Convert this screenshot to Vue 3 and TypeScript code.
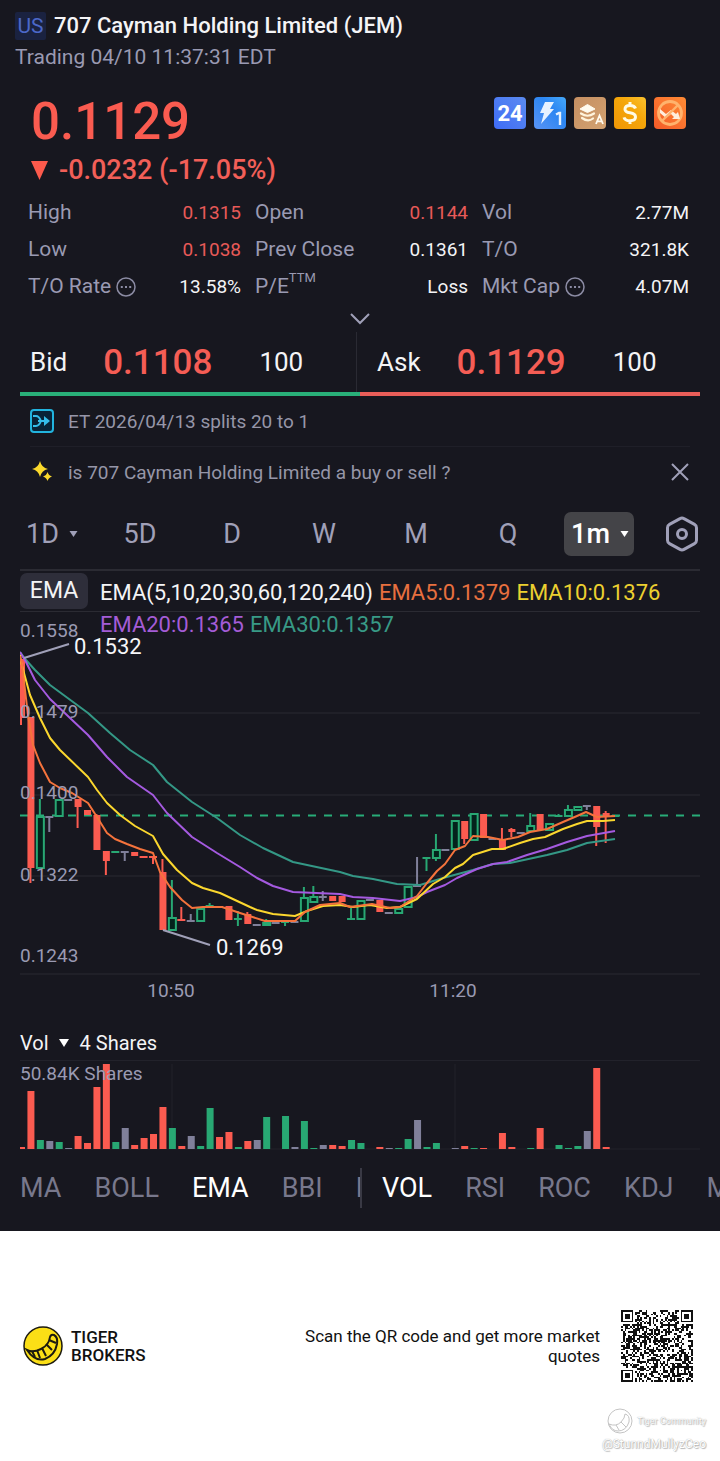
<script setup lang="ts">
import { computed, ref } from 'vue'

type Tone = 'down' | 'up' | 'flat'
interface Stat { label: string; value: string; tone?: 'down'; info?: boolean; sup?: string }
// tone, high, body top, body bottom, low
type Candle = [Tone, number, number, number, number]
type Bar = [Tone, number]

const stats: Stat[] = [
  { label: 'High', value: '0.1315', tone: 'down' },
  { label: 'Open', value: '0.1144', tone: 'down' },
  { label: 'Vol', value: '2.77M' },
  { label: 'Low', value: '0.1038', tone: 'down' },
  { label: 'Prev Close', value: '0.1361' },
  { label: 'T/O', value: '321.8K' },
  { label: 'T/O Rate', value: '13.58%', info: true },
  { label: 'P/E', value: 'Loss', sup: 'TTM' },
  { label: 'Mkt Cap', value: '4.07M', info: true },
]

const ranges = [
  { name: '1D', menu: true },
  { name: '5D', menu: false },
  { name: 'D', menu: false },
  { name: 'W', menu: false },
  { name: 'M', menu: false },
  { name: 'Q', menu: false },
  { name: '1m', menu: true },
]
const activeRange = ref('1m')

const mainIndicators = ['MA', 'BOLL', 'EMA', 'BBI', 'D']
const subIndicators = ['VOL', 'RSI', 'ROC', 'KDJ', 'M']
const activeMain = ref('EMA')
const activeSub = ref('VOL')
const tipOpen = ref(true)

const pitch = 9.43
const xAt = (i: number): number => 1 + i * pitch

const candles: Candle[] = [
  ['down', 659, 659, 718, 725], ['down', 717, 717, 868, 883], ['up', 799, 816, 868, 868],
  ['flat', 816, 816, 817, 832], ['up', 799, 799, 816, 816], ['flat', 799, 799, 800, 800],
  ['down', 799, 799, 807, 828], ['down', 810, 810, 815, 815], ['down', 814, 815, 850, 850],
  ['down', 851, 851, 861, 875], ['up', 851, 851, 852, 852], ['flat', 851, 851, 852, 861],
  ['down', 852, 852, 856, 856], ['down', 856, 856, 857, 857], ['down', 856, 856, 857, 864],
  ['down', 859, 872, 930, 930], ['up', 880, 917, 930, 930], ['down', 907, 919, 921, 921],
  ['flat', 914, 920, 921, 921], ['up', 908, 908, 921, 921], ['up', 903, 905, 907, 908],
  ['down', 906, 906, 907, 907], ['down', 906, 906, 920, 920], ['up', 911, 918, 920, 926],
  ['down', 912, 914, 924, 924], ['flat', 924, 924, 925, 925], ['up', 919, 922, 925, 925],
  ['flat', 922, 922, 923, 923], ['up', 920, 921, 923, 926], ['flat', 921, 921, 922, 922],
  ['up', 887, 897, 921, 921], ['up', 886, 896, 902, 902], ['flat', 891, 896, 897, 901],
  ['down', 896, 896, 901, 901], ['down', 896, 896, 902, 902], ['up', 907, 918, 920, 920],
  ['up', 900, 900, 919, 919], ['flat', 899, 899, 900, 900], ['down', 900, 900, 912, 912],
  ['flat', 912, 912, 913, 913], ['up', 908, 908, 913, 913], ['up', 886, 886, 907, 907],
  ['flat', 857, 885, 886, 886], ['up', 857, 857, 858, 871], ['up', 834, 849, 858, 861],
  ['flat', 849, 849, 850, 850], ['up', 820, 820, 849, 849], ['down', 821, 821, 839, 844],
  ['up', 813, 813, 840, 840], ['down', 814, 814, 838, 838], ['flat', 838, 838, 839, 839],
  ['down', 828, 839, 850, 850], ['down', 828, 829, 832, 837], ['flat', 832, 832, 833, 833],
  ['up', 813, 825, 831, 831], ['down', 814, 814, 830, 830], ['up', 823, 823, 830, 830],
  ['up', 814, 815, 816, 816], ['up', 805, 809, 816, 816], ['up', 806, 806, 810, 810],
  ['flat', 805, 805, 806, 810], ['down', 806, 806, 827, 846], ['down', 811, 813, 816, 843],
  ['up', 815, 815, 816, 816],
]

const volumes: Bar[] = [
  ['down', 2], ['down', 58], ['up', 9], ['flat', 8], ['up', 7], ['flat', 1], ['down', 13],
  ['down', 6], ['down', 62], ['down', 85], ['up', 7], ['flat', 21], ['down', 4], ['down', 11],
  ['down', 15], ['down', 42], ['up', 21], ['down', 3], ['flat', 13], ['up', 3], ['up', 41],
  ['down', 12], ['down', 17], ['up', 2], ['down', 8], ['flat', 9], ['up', 32], ['flat', 0],
  ['up', 33], ['flat', 2], ['up', 28], ['up', 1], ['flat', 4], ['down', 4], ['down', 3],
  ['up', 9], ['up', 6], ['flat', 0], ['down', 2], ['flat', 1], ['up', 1], ['up', 10],
  ['flat', 29], ['up', 2], ['up', 6], ['flat', 0], ['flat', 1], ['down', 3], ['up', 1],
  ['down', 1], ['flat', 0], ['down', 16], ['down', 2], ['flat', 0], ['up', 1], ['down', 21],
  ['flat', 0], ['up', 4], ['up', 1], ['up', 3], ['flat', 18], ['down', 81], ['down', 2],
]

const averages = [
  { name: 'ema30', points: '0,652 6,660 15,670 30,685 68,713 90,733 110,750 133,765 147,782 172,802 197,818 220,835 243,848 273,862 320,872 333,876 353,879 377,884 400,885 423,878 453,870 473,864 490,863 527,855 547,850 567,843 595,839' },
  { name: 'ema20', points: '0,652 6,662 15,680 30,699 50,718 68,735 87,757 107,777 133,795 147,813 172,837 197,853 220,867 237,878 253,886 273,892 320,894 333,897 353,898 380,901 397,897 407,892 425,885 437,878 457,869 473,864 487,862 507,855 527,849 547,842 567,836 595,831' },
  { name: 'ema10', points: '0,655 1,662 10,695 20,718 30,738 40,750 68,777 77,790 87,803 100,815 115,826 133,836 143,854 157,870 172,883 183,888 200,893 230,907 237,910 253,914 275,916 287,911 303,906 320,905 333,907 350,905 367,908 380,907 397,899 413,884 425,877 435,868 443,864 453,855 472,849 483,849 500,843 513,839 525,837 543,829 557,824 567,821 583,821 595,820' },
  { name: 'ema5', points: '0,656 2,665 8,715 13,745 20,763 30,782 40,788 52,793 60,798 68,803 77,817 87,833 95,839 107,844 120,849 133,853 140,872 150,887 162,900 172,908 183,907 202,907 220,913 245,921 275,921 285,912 300,905 320,903 330,907 352,904 370,908 380,907 397,896 407,883 417,871 425,864 435,850 445,846 453,836 468,837 483,840 498,837 510,832 527,829 543,822 557,816 566,812 577,817 595,816' },
]

const gridLines = [713, 795, 876, 974]
const priceLabels = [
  { text: '0.1558', y: 637 },
  { text: '0.1479', y: 718 },
  { text: '0.1400', y: 799 },
  { text: '0.1322', y: 881 },
  { text: '0.1243', y: 962 },
]

const qrSize = 41
const qrPath = computed<string>(() => {
  const inFinder = (r: number, c: number): boolean | null => {
    for (const [fr, fc] of [[0, 0], [0, qrSize - 7], [qrSize - 7, 0]]) {
      const y = r - fr
      const x = c - fc
      if (y >= -1 && y <= 7 && x >= -1 && x <= 7) {
        const ring = Math.max(Math.abs(y - 3), Math.abs(x - 3))
        return ring === 3 || ring <= 1
      }
    }
    const align = Math.max(Math.abs(r - 34), Math.abs(c - 34))
    return align <= 2 ? align !== 1 : null
  }
  let seed = 7071129
  let d = ''
  for (let r = 0; r < qrSize; r++) {
    for (let c = 0; c < qrSize; c++) {
      seed = (seed * 1103515245 + 12345) % 2147483648
      const fixed = inFinder(r, c)
      const on = fixed ?? (r === 6 || c === 6 ? (r + c) % 2 === 0 : (seed >> 12) % 100 < 52)
      if (on) d += `M${c} ${r}h1v1h-1z`
    }
  }
  return d
})
</script>

<template>
  <main class="page">
    <div class="board">
      <header class="head">
        <h1 class="title"><span class="market">US</span>707 Cayman Holding Limited (JEM)</h1>
        <p class="status">Trading 04/10 11:37:31 EDT</p>
      </header>

      <section class="quote">
        <div>
          <p class="price">0.1129</p>
          <p class="change">
            <svg class="fall" viewBox="0 0 17 19" aria-hidden="true"><path d="M0 0h17L8.500 19z" /></svg>
            -0.0232 (-17.05%)
          </p>
        </div>
        <div class="badges">
          <svg class="badge" viewBox="0 0 32 32" role="img" aria-label="24 hour trading">
            <defs><linearGradient id="b1" x1="0" y1="1" x2="1" y2="0"><stop stop-color="#3f6cf6" /><stop offset="1" stop-color="#5b8bf0" /></linearGradient></defs>
            <rect width="32" height="32" rx="4" fill="url(#b1)" />
            <text x="16" y="24" text-anchor="middle" class="badge-num">24</text>
          </svg>
          <svg class="badge" viewBox="0 0 32 32" role="img" aria-label="Level 1 quotes">
            <defs><linearGradient id="b2" x1="0" y1="1" x2="1" y2="0"><stop stop-color="#5a94f4" /><stop offset=".6" stop-color="#2c86f2" /><stop offset="1" stop-color="#45a9fa" /></linearGradient></defs>
            <rect width="32" height="32" rx="4" fill="url(#b2)" />
            <path d="M11 5h9l-4 7h4L7 27l3-11H6z" fill="#e6f2ff" />
            <path d="M22 17.500l3-1.500h1v12" fill="none" stroke="#e6f2ff" stroke-width="2.400" />
          </svg>
          <svg class="badge" viewBox="0 0 32 32" role="img" aria-label="Depth data">
            <defs><linearGradient id="b3" x1="0" y1="0" x2="1" y2="1"><stop stop-color="#c58f62" /><stop offset="1" stop-color="#d3a271" /></linearGradient></defs>
            <rect width="32" height="32" rx="4" fill="url(#b3)" />
            <path d="M6 12l7.500-4.500L21 12l-7.500 3.500z" fill="#fffbef" stroke="#fffbef" stroke-linejoin="round" />
            <path d="M7 16.500q6.500 4.500 13 0M8 21q6 4.500 11 .500" fill="none" stroke="#fff4dc" stroke-width="2.200" stroke-linecap="round" />
            <path d="M22 27l3.500-8.500L29 27M23.500 24.300h4" fill="none" stroke="#fffbef" stroke-width="1.800" />
          </svg>
          <svg class="badge" viewBox="0 0 32 32" role="img" aria-label="Funding">
            <defs><linearGradient id="b4" x1="0" y1="1" x2="1" y2="0"><stop stop-color="#ef9606" /><stop offset=".6" stop-color="#f5a70a" /><stop offset="1" stop-color="#fbc22e" /></linearGradient></defs>
            <rect width="32" height="32" rx="4" fill="url(#b4)" />
            <path d="M21.500 11.500Q20.500 8.500 16 8.500q-5 0-5 3.700 0 2.800 5 3.600 5.500.900 5.500 4.200 0 3.700-5.500 3.700-5 0-6-3.400M16 5v4M16 23v4" fill="none" stroke="#fffbe4" stroke-width="3" />
          </svg>
          <svg class="badge" viewBox="0 0 32 32" role="img" aria-label="Short selling restricted">
            <defs><linearGradient id="b5" x1="0" y1="1" x2="1" y2="0"><stop stop-color="#f45b28" /><stop offset="1" stop-color="#ff8b35" /></linearGradient></defs>
            <rect width="32" height="32" rx="4" fill="url(#b5)" />
            <circle cx="16" cy="16" r="11.500" fill="none" stroke="#ffb36d" stroke-width="2.800" />
            <path d="M6 12l6 5 5-4 5 4 2-2 2 7h-8l2-2-3-3-5 4-6-5z" fill="#ffeedd" />
            <path d="M8 24L24 8" stroke="#ffb36d" stroke-width="2.400" />
          </svg>
        </div>
      </section>

      <dl class="stats">
        <div v-for="s in stats" :key="s.label" class="stat">
          <dt>
            {{ s.label }}<sup v-if="s.sup">{{ s.sup }}</sup>
            <svg v-if="s.info" class="info" viewBox="0 0 20 20" aria-hidden="true">
              <circle cx="10" cy="10" r="9" fill="none" stroke="#8c8ca4" stroke-width="1.500" />
              <path d="M4.800 9h2v2h-2zM9 9h2v2H9zM13.200 9h2v2h-2z" fill="#8c8ca4" />
            </svg>
          </dt>
          <dd :class="s.tone">{{ s.value }}</dd>
        </div>
      </dl>

      <button class="more" type="button" aria-label="Show more">
        <svg viewBox="0 0 22 12" aria-hidden="true"><path d="M2 1l9 9 9-9" /></svg>
      </button>

      <section class="depth">
        <div class="side bid"><span>Bid</span><strong>0.1108</strong><span>100</span></div>
        <div class="side ask"><span>Ask</span><strong>0.1129</strong><span>100</span></div>
      </section>
      <div class="ratio"><i class="ratio-bid"></i><i class="ratio-ask"></i></div>

      <section class="notes">
        <p class="note">
          <svg class="note-icon" viewBox="0 0 24 24" aria-hidden="true">
            <rect x="1" y="1" width="22" height="22" rx="3" fill="#082337" stroke="#22b4de" stroke-width="2" />
            <path d="M3 7h3q3 0 5 5-2 5-5 5H3M8 12h9" fill="none" stroke="#35bdea" stroke-width="2" />
            <path d="M14 7l6 5-6 5z" fill="#35bdea" />
          </svg>
          <span>ET 2026/04/13 splits 20 to 1</span>
        </p>
        <p v-if="tipOpen" class="note">
          <svg class="note-icon" viewBox="0 0 24 24" aria-hidden="true">
            <path d="M10 1q1.500 6.500 8 8-6.500 1.500-8 8-1.500-6.500-8-8 6.500-1.500 8-8zM17.500 12q1 3.500 4.500 4.500-3.500 1-4.500 4.500-1-3.500-4.500-4.500 3.500-1 4.500-4.500z" fill="#fbd92c" />
          </svg>
          <span>is 707 Cayman Holding Limited a buy or sell ?</span>
          <button class="close" type="button" aria-label="Close" @click="tipOpen = false">
            <svg viewBox="0 0 20 20" aria-hidden="true"><path d="M2 2l16 16M18 2L2 18" /></svg>
          </button>
        </p>
      </section>

      <nav class="ranges">
        <div v-for="r in ranges" :key="r.name" class="range-cell">
          <button type="button" class="range" :class="{ active: r.name === activeRange, lead: r.name === '1D' }" @click="activeRange = r.name">
            {{ r.name }}
            <svg v-if="r.menu" class="caret" viewBox="0 0 8 6" aria-hidden="true"><path d="M0 0h8L4 6z" /></svg>
          </button>
        </div>
        <button type="button" class="settings" aria-label="Chart settings">
          <svg viewBox="0 0 34 36" aria-hidden="true">
            <path d="M15 2.600q2-1.200 4 0l10.500 5.800q2 1.100 2 3.400v12.400q0 2.300-2 3.400L19 33.400q-2 1.200-4 0L4.500 27.600q-2-1.100-2-3.400V11.800q0-2.300 2-3.400z" />
            <circle cx="17" cy="18" r="4.500" />
          </svg>
        </button>
      </nav>

      <section class="chart">
        <div class="legend">
          <button type="button" class="chip">EMA</button>
          <p class="readout">
            <span>EMA(5,10,20,30,60,120,240)</span>
            <span class="c5">EMA5:0.1379</span>
            <span class="c10">EMA10:0.1376</span>
            <span class="c20">EMA20:0.1365</span>
            <span class="c30">EMA30:0.1357</span>
          </p>
        </div>
        <svg class="plot" viewBox="0 612 680 398" role="img" aria-label="One minute candles">
          <line v-for="y in gridLines" :key="y" x1="0" x2="680" :y1="y" :y2="y" class="grid" />
          <line x1="0" x2="680" y1="815.500" y2="815.500" class="last" />
          <g v-for="(c, i) in candles" :key="i" :class="['candle', c[0]]">
            <line v-if="c[1] < c[2]" :x1="xAt(i)" :x2="xAt(i)" :y1="c[1]" :y2="c[2]" />
            <line v-if="c[4] > c[3]" :x1="xAt(i)" :x2="xAt(i)" :y1="c[3]" :y2="c[4]" />
            <rect v-if="c[3] - c[2] < 3" :x="xAt(i) - 4" :y="c[2]" width="8" :height="Math.max(c[3] - c[2], 2)" class="solid" />
            <rect v-else-if="c[0] === 'up'" :x="xAt(i) - 3" :y="c[2] + 1" width="7" :height="c[3] - c[2] - 1" class="hollow" />
            <rect v-else :x="xAt(i) - 3" :y="c[2]" width="7" :height="c[3] - c[2]" class="solid" />
          </g>
          <polyline v-for="a in averages" :key="a.name" :points="a.points" :class="['avg', a.name]" />
          <path d="M4 658l45-14M143 930l47 15" class="pointer" />
          <text v-for="p in priceLabels" :key="p.text" x="0" :y="p.y" class="axis">{{ p.text }}</text>
          <text x="54" y="654" class="extreme">0.1532</text>
          <text x="196" y="955" class="extreme">0.1269</text>
          <text x="151" y="997" text-anchor="middle" class="axis">10:50</text>
          <text x="433" y="997" text-anchor="middle" class="axis">11:20</text>
        </svg>
      </section>

      <section class="volume">
        <button type="button" class="vol-head">
          Vol
          <svg viewBox="0 0 10 8" aria-hidden="true"><path d="M0 0h10L5 8z" /></svg>
          <span>4 Shares</span>
        </button>
        <svg class="plot" viewBox="0 1060 680 91" role="img" aria-label="Volume">
          <path d="M0 1060.500h680M152 1064v85M435 1064v85M0 1149h680" class="vgrid" />
          <rect v-for="(v, i) in volumes" :key="i" :x="xAt(i) - 3" :y="1149 - v[1]" width="7" :height="v[1]" :class="['bar', v[0]]" />
          <text x="0" y="1080" class="axis">50.84K Shares</text>
        </svg>
      </section>

      <nav class="indicators">
        <div class="strip main-strip">
          <button v-for="n in mainIndicators" :key="n" type="button" :class="{ active: n === activeMain }" @click="activeMain = n">{{ n }}</button>
        </div>
        <div class="strip sub-strip">
          <button v-for="n in subIndicators" :key="n" type="button" :class="{ active: n === activeSub }" @click="activeSub = n">{{ n }}</button>
        </div>
      </nav>
    </div>

    <footer class="foot">
      <div class="brand-row">
        <svg class="brand-mark" viewBox="0 0 40 40" aria-hidden="true">
          <circle cx="20" cy="20" r="19" fill="#fbdf16" stroke="#1c1a10" stroke-width="1.500" />
          <path d="M4 24q6 3 14-1 8-4 9-12 1-3 4-2 4 2 3 9-2 11-12 15Q12 36 4 24z" fill="#fbdf16" stroke="#1c1a10" stroke-width="2" />
          <path d="M9 25l3 6M14 24l3 8M19 22l4 8M23 18l6 6M26 14l7 3" stroke="#1c1a10" stroke-width="2" />
        </svg>
        <p class="brand">TIGER<br />BROKERS</p>
        <p class="scan">Scan the QR code and get more market quotes</p>
        <svg class="qr" :viewBox="`0 0 ${qrSize} ${qrSize}`" shape-rendering="crispEdges" role="img" aria-label="QR code"><path :d="qrPath" /></svg>
      </div>
      <div class="mark">
        <p class="community">
          <svg viewBox="0 0 26 26" aria-hidden="true">
            <circle cx="13" cy="13" r="12" />
            <path d="M2 16q7 3 12-2 4-4 4-8 5 1 4 8-3 9-11 9-6 0-9-7M9 17l3 5M14 14l5 5" />
          </svg>
          Tiger Community
        </p>
        <p class="author">@StunndMullyzCeo</p>
      </div>
    </footer>
  </main>
</template>

<style>
body {
  margin: 0;
  background: #fff;
}
</style>

<style scoped>
.page {
  font-family: Roboto, "Liberation Sans", sans-serif;
  color: #f4f4f6;
  overflow: hidden;
}
p, h1, dl, dd { margin: 0; }
button {
  font: inherit;
  color: inherit;
  background: none;
  border: 0;
  padding: 0;
  cursor: pointer;
}
svg { display: block; }
.board { background: #17171f; padding-bottom: 23px; }
.head { padding: 10px 15px 0; }
.title {
  display: flex;
  align-items: center;
  gap: 8px;
  font-size: 22px;
  line-height: 32px;
  font-weight: 500;
}
.market {
  width: 31px;
  height: 28px;
  line-height: 28px;
  text-align: center;
  font-size: 21px;
  font-weight: 400;
  color: #4c68c8;
  background: #1a2240;
  border-radius: 2px;
}
.status { font-size: 21px; line-height: 30px; color: #9a9ab2; }
.quote {
  display: flex;
  justify-content: space-between;
  padding: 20px 34px 0 31px;
}
.price { font-size: 51px; line-height: 60px; font-weight: 500; color: #fa5b50; }
.change {
  display: flex;
  align-items: center;
  gap: 11px;
  font-size: 27px;
  line-height: 36px;
  font-weight: 500;
  color: #f25f58;
}
.fall { width: 17px; height: 19px; fill: #fc5a4c; }
.badges { display: flex; gap: 8px; padding-top: 5px; }
.badge { width: 32px; height: 32px; }
.badge-num { font-size: 22px; font-weight: 700; fill: #fff; }
.stats {
  display: grid;
  grid-template-columns: 213fr 213fr 207fr;
  column-gap: 14px;
  padding: 6px 31px 0 28px;
}
.stat {
  display: flex;
  justify-content: space-between;
  line-height: 37px;
  font-size: 19px;
  white-space: nowrap;
}
.stat dt { display: flex; align-items: center; font-size: 21px; color: #9a9ab2; }
.stat sup { font-size: 13px; line-height: 15px; align-self: flex-start; padding-top: 2px; }
.stat dd.down { color: #e85a58; }
.info { width: 20px; height: 20px; margin-left: 5px; }
.more { display: block; margin: 1px auto 0; height: 26px; }
.more svg {
  width: 22px;
  height: 12px;
  fill: none;
  stroke: #a0a0b8;
  stroke-width: 2;
}
.depth { display: grid; grid-template-columns: 337fr 343fr; margin: 0 20px; }
.side {
  display: flex;
  align-items: center;
  height: 60px;
  box-sizing: border-box;
  font-size: 26px;
}
.side strong { font-size: 35px; font-weight: 500; color: #f55d55; margin: 0 47px 0 36px; }
.bid { padding-left: 10px; border-right: 1px solid #2a2a33; }
.ask { padding-left: 20px; }
.ratio { display: flex; margin: 0 20px; }
.ratio i { flex: 1; height: 4px; }
.ratio-bid { background: #29b079; }
.ratio-ask { background: #ea5e59; }
.notes { padding: 0 30px; font-size: 19px; color: #9696a8; }
.note { display: flex; align-items: center; height: 50px; }
.note + .note { border-top: 1px solid #1f1f28; }
.note-icon { width: 24px; height: 24px; margin-right: 14px; }
.close { margin-left: auto; }
.close svg { width: 20px; height: 20px; fill: none; stroke: #a0a0b8; stroke-width: 2; }
.ranges {
  display: grid;
  grid-template-columns: repeat(7, 92fr) 74fr;
  box-sizing: border-box;
  height: 72px;
  padding: 2px 1px 0;
  align-items: center;
}
.range-cell { display: flex; justify-content: center; }
.range {
  display: flex;
  align-items: center;
  height: 44px;
  padding: 0 5px 0 7px;
  border-radius: 7px;
  font-size: 27px;
  color: #a0a0b8;
}
.range.lead { margin-left: 8px; }
.range.active { background: #444448; color: #fff; font-weight: 500; }
.caret { width: 9px; height: 6px; margin-left: 10px; fill: currentColor; }
.settings { justify-self: center; }
.settings svg { width: 34px; height: 36px; fill: none; stroke: #a0a0b8; stroke-width: 3; }
.chart { margin: 0 20px; border-top: 2px solid #2b2b33; }
.legend {
  display: flex;
  height: 40px;
  border-bottom: 1px solid #2b2b33;
  position: relative;
  z-index: 1;
}
.chip {
  width: 68px;
  height: 36px;
  margin-top: 2px;
  border-radius: 7px;
  background: #2e2e3a;
  font-size: 23px;
  line-height: 36px;
  flex: none;
}
.readout {
  display: flex;
  flex-wrap: wrap;
  flex: 1;
  gap: 0 6px;
  align-content: flex-start;
  margin-left: 12px;
  padding-top: 6px;
  font-size: 22px;
  line-height: 32px;
  white-space: nowrap;
}
.c5 { color: #e8703f; }
.c10 { color: #ecd030; }
.c20 { color: #a45cd6; }
.c30 { color: #389a86; }
.plot { width: 100%; height: auto; }
.grid { stroke: #2b2b33; stroke-width: 1; }
.last { stroke: #28ac78; stroke-width: 2; stroke-dasharray: 8 8; }
.candle line { stroke-width: 2; }
.down line { stroke: #fb5b50; }
.up line { stroke: #28a873; }
.flat line { stroke: #80809a; }
.down .solid, .bar.down { fill: #fb5b50; }
.up .solid, .bar.up { fill: #28a873; }
.flat .solid, .bar.flat { fill: #80809a; }
.hollow { fill: #04221c; stroke: #28a873; stroke-width: 2; }
.avg { fill: none; stroke-width: 2; stroke-linejoin: round; }
.ema5 { stroke: #f5733c; }
.ema10 { stroke: #fbd72e; }
.ema20 { stroke: #a55ae0; }
.ema30 { stroke: #349886; }
.pointer { fill: none; stroke: #a0a0b8; stroke-width: 2; }
.axis { font-size: 19px; fill: #9a9ab2; }
.extreme { font-size: 22px; fill: #f6f6f8; }
.volume { margin: 20px 20px 0; }
.vol-head { display: flex; align-items: center; height: 30px; font-size: 20px; padding-bottom: 4px; }
.vol-head svg { width: 10px; height: 8px; margin: 0 11px 0 10px; fill: #fff; }
.vgrid { fill: none; stroke: #22222b; stroke-width: 1; }
.indicators { display: flex; margin-top: 17px; height: 40px; font-size: 27px; color: #78788c; }
.strip { display: flex; gap: 33px; overflow: hidden; align-items: center; }
.strip button { flex: none; }
.strip .active { color: #fff; }
.main-strip { flex: 340; padding-left: 20px; border-right: 2px solid #393944; }
.sub-strip { flex: 338; padding-left: 20px; }
.main-strip, .sub-strip { box-sizing: border-box; min-width: 0; }
.foot { color: #111; background: #fff; padding: 79px 0 8px; }
.brand-row { display: flex; align-items: center; padding: 0 27px 0 23px; }
.brand-mark { width: 40px; height: 40px; }
.brand { margin-left: 8px; font-size: 17px; line-height: 18px; font-weight: 500; }
.scan {
  width: 300px;
  margin-left: auto;
  font-size: 17px;
  line-height: 20px;
  text-align: right;
}
.qr { width: 72px; height: 72px; margin-left: 21px; fill: #111; }
.mark {
  display: flex;
  flex-direction: column;
  align-items: flex-end;
  padding: 26px 14px 0 0;
  color: #fff;
  text-shadow: 0 0 1px #999, 1px 1px 1px #bbb;
}
.community { display: flex; align-items: center; gap: 4px; font-size: 9px; line-height: 26px; }
.community svg { width: 26px; height: 26px; fill: none; stroke: #c4c4c4; stroke-width: 1; }
.author { font-size: 12px; line-height: 20px; }
</style>
